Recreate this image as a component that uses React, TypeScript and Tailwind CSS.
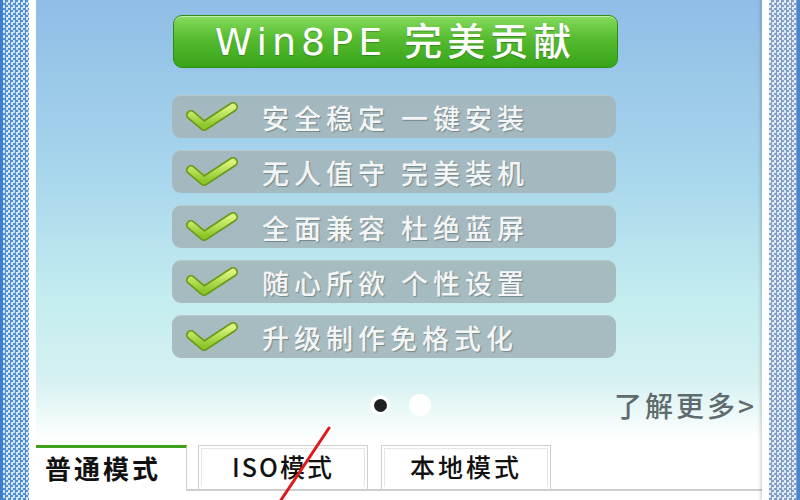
import React from 'react'

const features = [
  '安全稳定 一键安装',
  '无人值守 完美装机',
  '全面兼容 杜绝蓝屏',
  '随心所欲 个性设置',
  '升级制作免格式化',
]

function Check() {
  return (
    <svg width="52" height="30" viewBox="0 0 52 30" className="shrink-0">
      <defs>
        <linearGradient id="chk" x1="0" y1="0" x2="0" y2="1">
          <stop offset="0" stopColor="#dcf47e" />
          <stop offset="1" stopColor="#8cc628" />
        </linearGradient>
      </defs>
      <polyline points="5,13 18,24 47,5" fill="none" stroke="#6b9a1c" strokeWidth="10" strokeLinecap="round" strokeLinejoin="round" />
      <polyline points="5,13 18,24 47,5" fill="none" stroke="url(#chk)" strokeWidth="6.5" strokeLinecap="round" strokeLinejoin="round" />
    </svg>
  )
}

export default function App() {
  return (
    <div className="relative flex w-[800px] h-[500px] overflow-hidden bg-white font-['Noto_Sans_CJK_SC',sans-serif]">
      {/* 左侧边框 */}
      <div className="w-[29px] border-l-[3px] border-[#3d7fd0] bg-[image:repeating-conic-gradient(#4f8fd6_0_25%,#d6e6f6_0_50%)] bg-[length:5px_5px]" />
      <div className="w-[7px] bg-white shadow-[2px_0_3px_rgba(0,0,0,0.15)]" />

      {/* 主区域 */}
      <div className="flex-1 flex flex-col bg-[image:linear-gradient(180deg,#8fbde6_0%,#a8d6ec_35%,#c4edf0_60%,#d6f1f1_76%,#ffffff_88%)]">
        {/* 标题 */}
        <div className="mt-[15px] ml-[137px] w-[445px] h-[53px] rounded-[9px] border border-[#2f8c12] bg-[image:linear-gradient(180deg,#86dc5e_0%,#55bb2e_45%,#38a41a_100%)] flex items-center justify-center shadow-[inset_0_1px_0_rgba(255,255,255,0.5)]">
          <span className="text-white text-[38px] leading-none tracking-[5px] font-medium font-['DejaVu_Sans','Noto_Sans_CJK_SC',sans-serif] [text-shadow:0_1px_1px_rgba(0,60,0,0.35)]">
            Win8PE 完美贡献
          </span>
        </div>

        {/* 功能列表 */}
        <div className="mt-[27px] ml-[136px] flex flex-col gap-[12px]">
          {features.map((f) => (
            <div
              key={f}
              className="w-[444px] h-[43px] rounded-[9px] bg-[#a3b6ba]/90 border-t border-[#b8c8cb] flex items-center pl-[14px]"
            >
              <Check />
              <span className="ml-[24px] text-[27px] leading-none tracking-[5px] font-medium text-[#f4f6f6] whitespace-pre [text-shadow:1px_1px_1px_rgba(60,70,70,0.45)]">
                {f}
              </span>
            </div>
          ))}
        </div>

        {/* 分页点 + 了解更多 */}
        <div className="mt-[32px] h-[30px] flex items-center">
          <div className="ml-[334px] w-[20px] h-[20px] rounded-full bg-white flex items-center justify-center">
            <div className="w-[13px] h-[13px] rounded-full bg-[#222]" />
          </div>
          <div className="ml-[19px] w-[22px] h-[22px] rounded-full bg-white" />
          <span className="ml-auto mr-[5px] text-[28px] leading-none tracking-[3px] font-medium text-[#5f6b6d]">
            了解更多&gt;
          </span>
        </div>

        {/* 模式标签 */}
        <div className="mt-[25px] flex h-[46px] border-b-2 border-[#cfcfcf]">
          <div className="w-[151px] -mb-[2px] bg-white border-t-[3px] border-[#3ea11a] border-r border-r-[#cfcfcf] flex items-center pl-[9px] pb-[4px]">
            <span className="text-[26px] leading-none font-bold text-[#111] tracking-[3px]">普通模式</span>
          </div>
          <div className="ml-[11px] w-[170px] bg-white border border-[#cfcfcf] border-b-0 p-[2px]">
            <div className="h-full border border-[#e6e6e6] border-b-0 flex items-center justify-center pb-[4px]">
              <span className="text-[25px] leading-none font-medium text-[#111] tracking-[2px]">ISO模式</span>
            </div>
          </div>
          <div className="ml-[13px] w-[170px] bg-white border border-[#cfcfcf] border-b-0 p-[2px]">
            <div className="h-full border border-[#e6e6e6] border-b-0 flex items-center justify-center pb-[4px]">
              <span className="text-[25px] leading-none font-medium text-[#111] tracking-[3px]">本地模式</span>
            </div>
          </div>
        </div>
        <div className="flex-1 bg-white" />
      </div>

      {/* 右侧边框 */}
      <div className="w-[7px] bg-white shadow-[-2px_0_3px_rgba(0,0,0,0.15)]" />
      <div className="w-[31px] bg-[image:repeating-conic-gradient(#7f9fc8_0_25%,#e2eaf3_0_50%)] bg-[length:5px_5px] border-r-[3px] border-[#4a86cf]" />

      {/* 红色标注线 */}
      <svg className="absolute left-0 top-0 pointer-events-none" width="800" height="500">
        <path d="M329 428 L281 500" stroke="#e01818" strokeWidth="3" strokeLinecap="round" />
      </svg>
    </div>
  )
}
